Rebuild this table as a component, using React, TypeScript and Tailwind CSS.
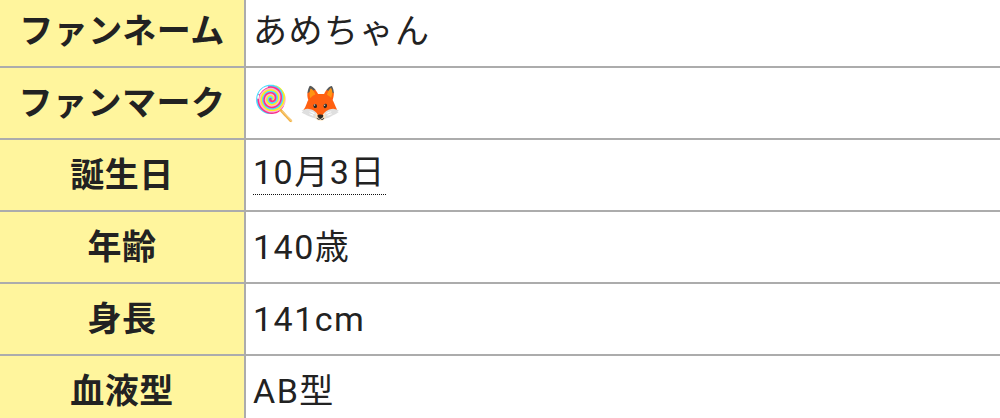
import React from "react";

const rows: { label: string; value: React.ReactNode }[] = [
  { label: "ファンネーム", value: "あめちゃん" },
  { label: "ファンマーク", value: <span className="tracking-[4px]">🍭🦊</span> },
  {
    label: "誕生日",
    value: <span className="border-b border-dotted border-[#111] pb-[5px]">10月3日</span>,
  },
  { label: "年齢", value: "140歳" },
  { label: "身長", value: "141cm" },
  { label: "血液型", value: "AB型" },
];

export default function App() {
  return (
    <div className="w-[1000px] h-[418px] overflow-hidden bg-white">
      <div className="-mt-[4px] flex flex-col">
        {rows.map((r) => (
          <div key={r.label} className="flex h-[72px] border-b-2 border-[#acacac]">
            <div className="w-[246px] shrink-0 flex items-center justify-center pb-[5px] bg-[#fff59d] border-r-2 border-[#acacac] text-[34px] font-semibold text-[#222] tracking-[0.5px]">
              <span className="[font-family:'Noto_Sans_CJK_JP',sans-serif] leading-none">{r.label}</span>
            </div>
            <div className="flex-1 flex items-center pl-[7px] text-[34px] tracking-[1.5px] text-[#222] [font-family:Roboto,'Noto_Sans_CJK_JP','Noto_Color_Emoji',sans-serif] leading-none">
              {r.value}
            </div>
          </div>
        ))}
      </div>
    </div>
  );
}
